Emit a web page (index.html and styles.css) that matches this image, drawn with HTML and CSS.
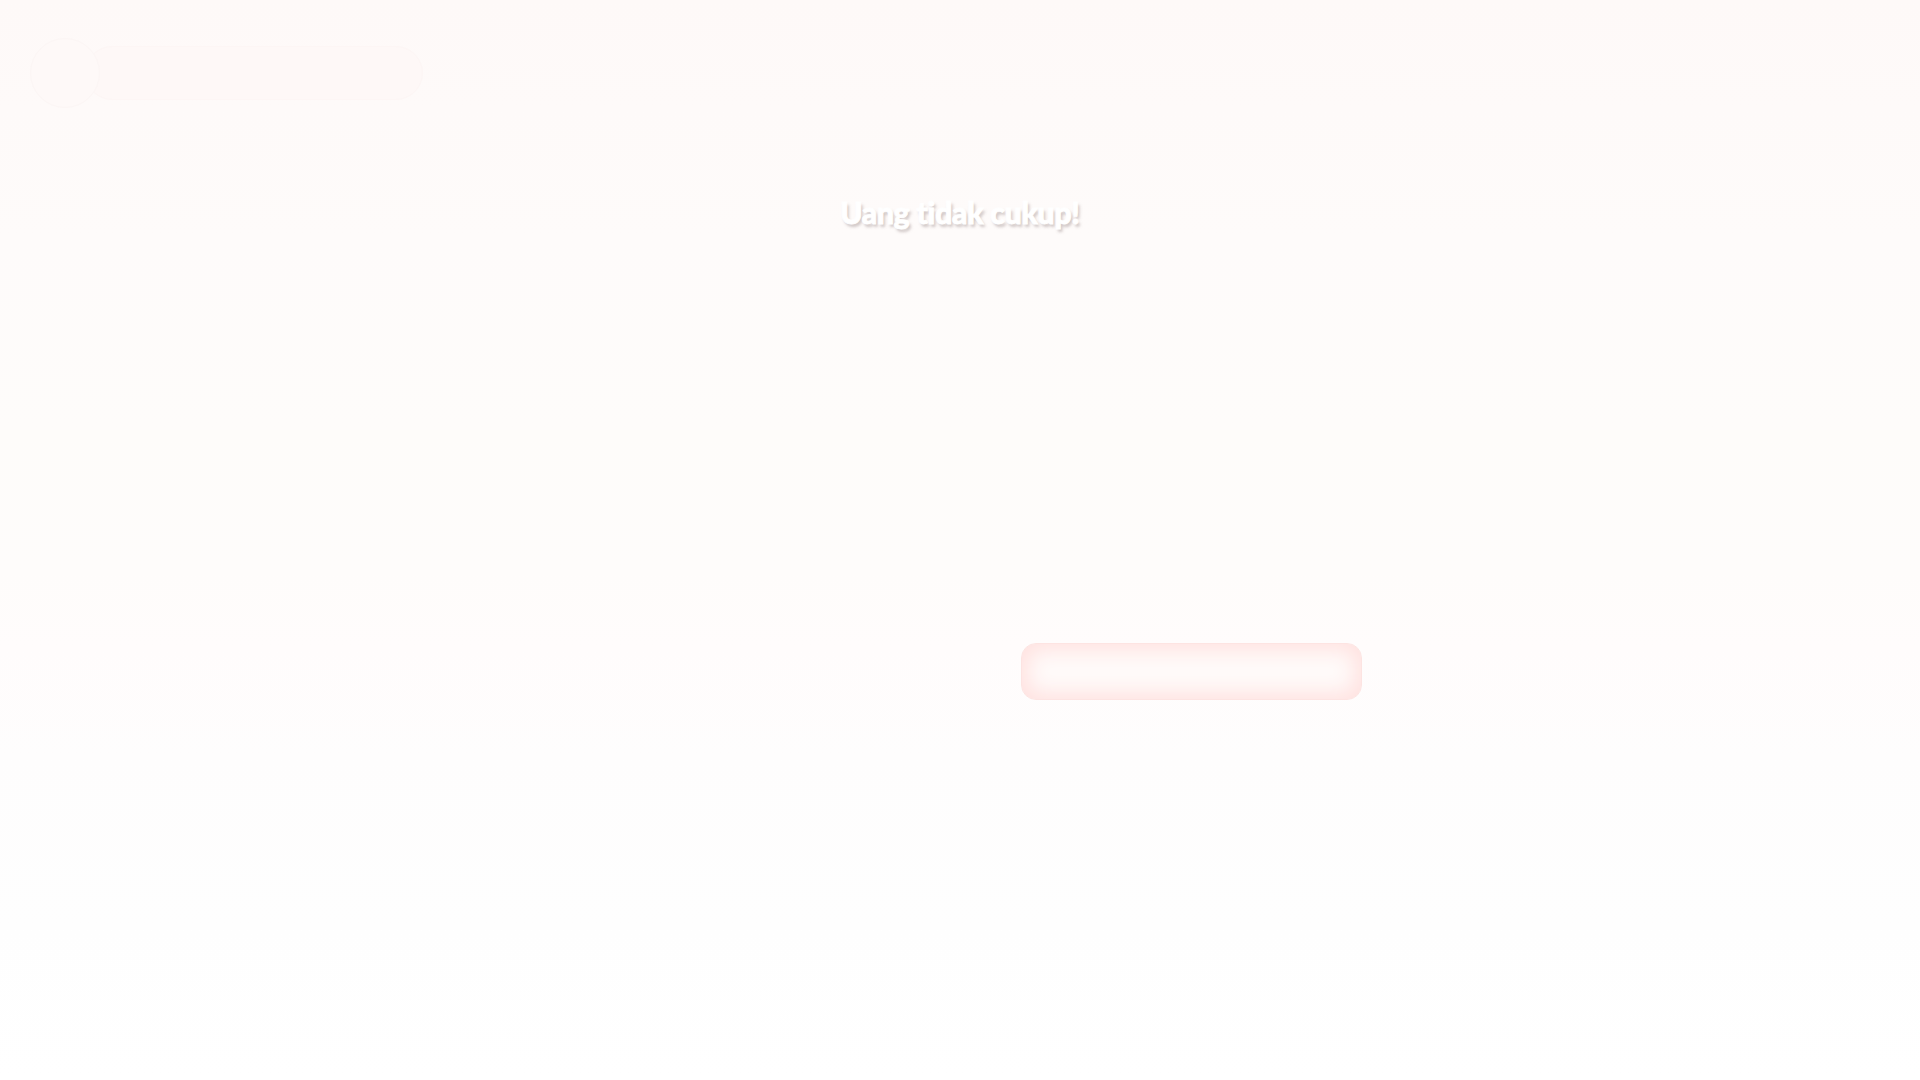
FILE: index.html
```html
<!DOCTYPE html>
<html lang="id">

<head>
    <meta charset="UTF-8">
    <meta name="viewport" content="width=device-width, initial-scale=1.0">
    <title>Toko</title>

    <link rel="stylesheet" href="styles.css">
</head>

<body>
    <div class="screen">
        <div class="hud">
            <div class="avatar"></div>
            <div class="coin-bar"></div>
        </div>

        <h1 class="notice">Uang tidak cukup!</h1>

        <div class="actions">
            <button type="button" class="btn-buy"></button>
        </div>
    </div>
</body>

</html>
```

FILE: styles.css
```css
html,
body {
    margin: 0;
    height: 100%;
}

body {
    font-family: Lato, 'Open Sans', sans-serif;
    background: linear-gradient(180deg,
            #fef9f8 0%,
            #fefaf9 10%,
            #fefbfa 22%,
            #fefcfa 40%,
            #fefcfb 53%,
            #fffcfc 60%,
            #fefdfd 70%,
            #fefefe 86%,
            #ffffff 100%);
}

.screen {
    height: 1080px;
    display: flex;
    flex-direction: column;
}

.hud {
    display: flex;
    align-items: center;
    padding: 38px 0 0 30px;
}

.avatar {
    width: 68px;
    height: 68px;
    border-radius: 50%;
    border: 1px solid #fcf6f5;
    background-color: #fef9f8;
    position: relative;
    z-index: 1;
}

.coin-bar {
    width: 336px;
    height: 52px;
    margin-left: -15px;
    border-radius: 27px;
    border: 1px solid #fdf6f5;
    background-color: #fef8f7;
}

.notice {
    margin: 86px 0 0;
    text-align: center;
    font-size: 30px;
    font-weight: 900;
    color: #ffffff;
    letter-spacing: -0.2px;
    -webkit-text-stroke: 0.8px #ffffff;
    text-shadow: 2px 3px 3px rgba(120, 100, 100, 0.35);
}

.actions {
    display: flex;
    padding: 413px 0 0 1021px;
}

.btn-buy {
    width: 341px;
    height: 57px;
    border: 1px solid #fde4e2;
    border-radius: 15px;
    background-color: #fffbfa;
    box-shadow: inset 0 0 22px 6px #ffe1df;
}
```
